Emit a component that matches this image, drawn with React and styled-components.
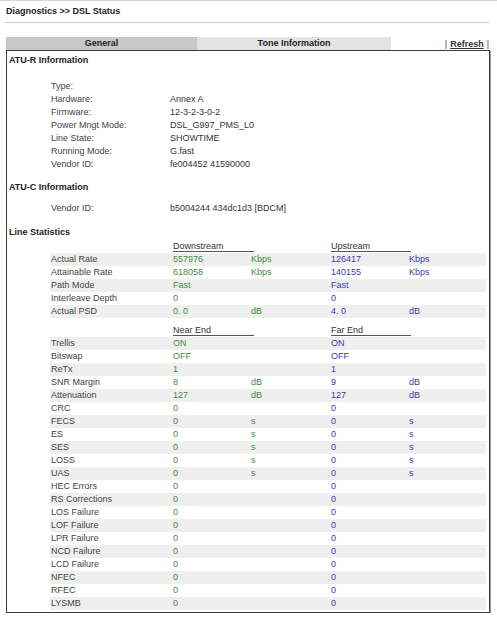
import React from 'react'
import styled, { createGlobalStyle } from 'styled-components'

const GlobalStyle = createGlobalStyle`
  body {
    margin: 0;
    background: #fff;
    font-family: "Liberation Sans", Arial, sans-serif;
    font-size: 9px;
    color: #333;
  }
`

const atuR = [
  ['Type:', ''],
  ['Hardware:', 'Annex A'],
  ['Firmware:', '12-3-2-3-0-2'],
  ['Power Mngt Mode:', 'DSL_G997_PMS_L0'],
  ['Line State:', 'SHOWTIME'],
  ['Running Mode:', 'G.fast'],
  ['Vendor ID:', 'fe004452 41590000'],
]

const rates = [
  ['Actual Rate', '557976', 'Kbps', '126417', 'Kbps'],
  ['Attainable Rate', '618058', 'Kbps', '140155', 'Kbps'],
  ['Path Mode', 'Fast', '', 'Fast', ''],
  ['Interleave Depth', '0', '', '0', ''],
  ['Actual PSD', '0. 0', 'dB', '4. 0', 'dB'],
]

const zeros = ['HEC Errors', 'RS Corrections', 'LOS Failure', 'LOF Failure', 'LPR Failure',
  'NCD Failure', 'LCD Failure', 'NFEC', 'RFEC', 'LYSMB'].map(l => [l, '0', '', '0', ''])

const ends = [
  ['Trellis', 'ON', '', 'ON', ''],
  ['Bitswap', 'OFF', '', 'OFF', ''],
  ['ReTx', '1', '', '1', ''],
  ['SNR Margin', '8', 'dB', '9', 'dB'],
  ['Attenuation', '127', 'dB', '127', 'dB'],
  ['CRC', '0', '', '0', ''],
  ['FECS', '0', 's', '0', 's'],
  ['ES', '0', 's', '0', 's'],
  ['SES', '0', 's', '0', 's'],
  ['LOSS', '0', 's', '0', 's'],
  ['UAS', '0', 's', '0', 's'],
  ...zeros,
]

const Page = styled.div`
  border-top: 1px solid #d6d6d6;
  width: 497px;
`

const TitleBar = styled.div`
  margin: 0 7px 0 5px;
  padding-left: 1px;
  height: 21px;
  line-height: 21px;
  font-weight: bold;
  color: #222;
  border-bottom: 1px solid #cfcfcf;
`

const TabBar = styled.div`
  display: flex;
  align-items: center;
  margin: 14px 0 0 6px;
  width: 484px;
  height: 13px;
`

const Tab = styled.div`
  width: ${p => p.$w}px;
  height: 13px;
  line-height: 13px;
  text-align: center;
  font-weight: bold;
  color: #222;
  background: ${p => (p.$active ? '#c8c8c8' : '#e3e3e3')};
`

const Links = styled.div`
  margin-left: auto;
  margin-right: 1px;
  color: #444;
  line-height: 13px;
  padding-top: 1px;

  a {
    color: #333;
    font-weight: bold;
    text-decoration: underline;
    margin: 0 3px;
  }
`

const Panel = styled.div`
  margin-left: 6px;
  width: 482px;
  border: 1px solid #3c3c3c;
  box-shadow: 1px 1px 0 #9a9a9a;
  padding: 3px 0 2px;
`

const SectionTitle = styled.div`
  margin-top: ${p => p.$gap || 0}px;
  padding-left: 2px;
  height: 13px;
  line-height: 13px;
  font-weight: bold;
  color: #222;
`

const Block = styled.div`
  margin: ${p => p.$gap || 0}px 3px 0 43px;
`

const InfoRow = styled.div`
  display: grid;
  grid-template-columns: 119px 1fr;
  padding-left: 1px;
  height: 13px;
  line-height: 13px;
  color: #444;

  span + span {
    color: #333;
  }
`

const StatRow = styled.div`
  display: grid;
  grid-template-columns: 122px 78px 80px 78px 1fr;
  padding-left: 1px;
  height: 13px;
  line-height: 13px;
  color: #444;
  background: ${p => (p.$striped ? '#efefef' : 'transparent')};
`

const Value = styled.span`
  color: ${p => (p.$up ? '#3b3ba6' : '#478a3c')};
`

const HeadLabel = styled.span`
  display: inline-block;
  width: ${p => p.$w}px;
  line-height: 9px;
  color: #333;
  border-bottom: 1px solid #555;
`

function StatHeader({ down, up, gap }) {
  return (
    <StatRow style={gap ? { marginTop: gap } : undefined}>
      <span />
      <span style={{ gridColumn: '2 / 4' }}><HeadLabel $w={81}>{down}</HeadLabel></span>
      <span style={{ gridColumn: '4 / 6' }}><HeadLabel $w={80}>{up}</HeadLabel></span>
    </StatRow>
  )
}

function StatRows({ rows }) {
  return rows.map(([label, dv, du, uv, uu], i) => (
    <StatRow key={label} $striped={i % 2 === 0}>
      <span>{label}</span>
      <Value>{dv}</Value>
      <Value>{du}</Value>
      <Value $up>{uv}</Value>
      <Value $up>{uu}</Value>
    </StatRow>
  ))
}

export default function App() {
  return (
    <Page>
      <GlobalStyle />
      <TitleBar>Diagnostics &gt;&gt; DSL Status</TitleBar>
      <TabBar>
        <Tab $w={191} $active>General</Tab>
        <Tab $w={194}>Tone Information</Tab>
        <Links>|<a>Refresh</a>|</Links>
      </TabBar>
      <Panel>
        <SectionTitle>ATU-R Information</SectionTitle>
        <Block $gap={13}>
          {atuR.map(([label, value]) => (
            <InfoRow key={label}>
              <span>{label}</span>
              <span>{value}</span>
            </InfoRow>
          ))}
        </Block>
        <SectionTitle $gap={10}>ATU-C Information</SectionTitle>
        <Block $gap={8}>
          <InfoRow>
            <span>Vendor ID:</span>
            <span>b5004244 434dc1d3 [BDCM]</span>
          </InfoRow>
        </Block>
        <SectionTitle $gap={11}>Line Statistics</SectionTitle>
        <Block $gap={1}>
          <StatHeader down="Downstream" up="Upstream" />
          <StatRows rows={rates} />
          <StatHeader down="Near End" up="Far End" gap={6} />
          <StatRows rows={ends} />
        </Block>
      </Panel>
    </Page>
  )
}
